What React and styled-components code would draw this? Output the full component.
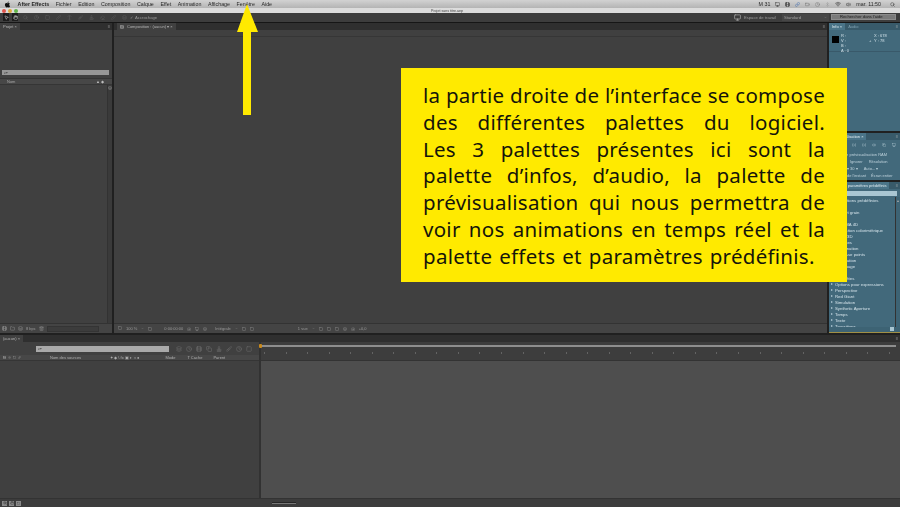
import React from "react";
import styled, { createGlobalStyle } from "styled-components";
import { FaApple } from "react-icons/fa";
import {
  Battery, Bluetooth, Brush, Camera, ChevronDown, Clock, Copy, Eraser, Film, Folder, Hand, Layers, Link, Monitor,
  MousePointer2, Pen, Play, Search, SkipBack, SkipForward, Square, Stamp, Trash2, Type, Volume2, Wifi, ZoomIn,
} from "lucide-react";

const GlobalStyle = createGlobalStyle`
  html, body { margin: 0; height: 507px; overflow: hidden; background: #232323; }
  * { box-sizing: border-box; }
`;

const Page = styled.div`
  position: relative;
  width: 900px;
  height: 507px;
  overflow: hidden;
  font-family: "Liberation Sans", Arial, sans-serif;
`;
const Screen = styled.div`
  width: 900px;
  height: 507px;
  display: flex;
  flex-direction: column;
  background: #202020;
  filter: blur(0.5px);
`;

const MenuBar = styled.div`
  height: 8px;
  flex: none;
  display: flex;
  align-items: center;
  padding: 0 5px 0 4px;
  background: linear-gradient(#d2d2d2, #b4b4b4);
  color: #262626;
  font-size: 5.3px;
`;
const Menus = styled.div`
  display: flex;
  align-items: center;
  gap: 6.6px;
  flex: 1;
`;
const AppleMark = styled.span`
  display: flex;
  width: 7px;
`;
const MenuName = styled.span`
  font-weight: ${(p) => (p.$bold ? "bold" : "normal")};
  white-space: nowrap;
`;
const Status = styled.div`
  display: flex;
  align-items: center;
  gap: 5px;
`;
const StatusEnd = styled.span`
  display: flex;
  margin-left: 4px;
`;
const TitleBar = styled.div`
  height: 5px;
  flex: none;
  display: flex;
  align-items: center;
  position: relative;
  padding-left: 2px;
  gap: 2px;
  background: #dcdcdc;
  color: #444;
  font-size: 3.6px;
`;
const Light = styled.span`
  width: 4px;
  height: 4px;
  border-radius: 50%;
  background: ${(p) => p.$color};
`;
const WindowName = styled.span`
  position: absolute;
  left: 431px;
`;

const Toolbar = styled.div`
  height: 10px;
  flex: none;
  display: flex;
  align-items: center;
  padding: 0 4px 1px 3px;
  background: #3d3d3d;
  border-bottom: 1px solid #161616;
  color: #9a9a9a;
  font-size: 4.2px;
`;
const ToolGroup = styled.div`
  display: flex;
  align-items: center;
  gap: ${(p) => p.$gap || 4}px;
  margin-left: ${(p) => p.$left || 0}px;
`;
const ToolSlot = styled.span`
  display: flex;
  width: 6px;
  height: 8px;
  align-items: center;
  justify-content: center;
  background: ${(p) => (p.$on ? "#1d1d1d" : "transparent")};
  color: ${(p) => (p.$on ? "#eee" : "#626262")};
`;
const Spring = styled.div`
  flex: 1;
`;
const Dropdown = styled.div`
  width: ${(p) => p.$w}px;
  height: 7px;
  display: flex;
  align-items: center;
  justify-content: space-between;
  padding: 0 2px;
  margin-left: 6px;
  background: #464646;
  color: #a0a0a0;
`;
const HelpSearch = styled.div`
  width: 65px;
  height: 6px;
  margin-left: 2px;
  padding-left: 8px;
  background: #7a7a7a;
  border: 1px solid #8c8c8c;
  color: #202020;
  line-height: 4px;
  white-space: nowrap;
`;

const Workspace = styled.div`
  height: 310px;
  flex: none;
  display: flex;
  gap: 2px;
`;
const Panel = styled.div`
  display: flex;
  flex-direction: column;
  width: ${(p) => (p.$w ? `${p.$w}px` : "auto")};
  flex: ${(p) => (p.$w ? "none" : 1)};
  min-width: 0;
  background: #404040;
  color: #a5a5a5;
  font-size: 4px;
`;
const TabBar = styled.div`
  height: 7px;
  flex: none;
  display: flex;
  align-items: stretch;
  background: #2f2f2f;
`;
const Tab = styled.div`
  display: flex;
  align-items: center;
  gap: 3px;
  padding: 0 3px;
  background: #404040;
  color: #b4b4b4;
  white-space: nowrap;
  margin-left: ${(p) => p.$left || 0}px;
`;
const PanelMenu = styled.span`
  margin-left: auto;
  margin-right: 2px;
  align-self: center;
  color: #bdbdbd;
  font-size: 4px;
`;
const ThinRow = styled.div`
  height: 7px;
  flex: none;
  border-bottom: 1px solid #363636;
`;
const ProjectTop = styled.div`
  flex: none;
  height: 45px;
  display: flex;
  align-items: flex-end;
  padding: 0 2px;
`;
const ProjectSearch = styled.div`
  width: 107px;
  height: 5px;
  padding-left: 2px;
  background: #979797;
  color: #222;
  line-height: 5px;
`;
const ColumnHeader = styled.div`
  height: 7px;
  margin-top: 3px;
  flex: none;
  display: flex;
  align-items: center;
  padding: 0 6px 0 7px;
  background: #474747;
  border-top: 1px solid #353535;
  border-bottom: 1px solid #353535;
`;
const ProjectBody = styled.div`
  flex: 1;
  display: flex;
  justify-content: flex-end;
`;
const Scrollbar = styled.div`
  width: ${(p) => p.$w || 5}px;
  display: flex;
  flex-direction: column;
  align-items: center;
  padding-top: 1px;
  background: ${(p) => p.$bg || "#3a3a3a"};
  border-left: 1px solid #323232;
  color: #aaa;
`;
const PanelFooter = styled.div`
  height: 10px;
  flex: none;
  display: flex;
  align-items: center;
  gap: ${(p) => p.$gap || 3}px;
  padding: 0 2px;
  background: #444;
  border-top: 1px solid #333;
  color: #9a9a9a;
  white-space: nowrap;
`;
const FootTrack = styled.div`
  width: 52px;
  height: 6px;
  background: #3c3c3c;
  border: 1px solid #343434;
`;
const CompBody = styled.div`
  flex: 1;
`;
const FootLabel = styled.span`
  margin-left: ${(p) => p.$left || 0}px;
`;

const Column = styled.div`
  width: 71px;
  flex: none;
  display: flex;
  flex-direction: column;
  gap: 2px;
  color: #cfe0e8;
  font-size: 4px;
  border-bottom: 1px solid #a08f45;
`;
const TealPanel = styled.div`
  height: ${(p) => (p.$h ? `${p.$h}px` : "auto")};
  flex: ${(p) => (p.$h ? "none" : 1)};
  display: flex;
  flex-direction: column;
  min-height: 0;
  background: #42697b;
`;
const TealTabs = styled.div`
  height: 7px;
  flex: none;
  display: flex;
  align-items: stretch;
  background: #385a6a;
`;
const TealTab = styled.div`
  display: flex;
  align-items: center;
  gap: 2px;
  padding: 0 3px;
  white-space: nowrap;
  background: ${(p) => (p.$on ? "#4a7488" : "transparent")};
  color: ${(p) => (p.$on ? "#e0edf2" : "#7ea0b0")};
`;
const InfoRow = styled.div`
  display: flex;
  gap: 2px;
  padding: 3px 3px 0;
  height: 22px;
  border-bottom: 1px solid #39596a;
`;
const Swatch = styled.div`
  width: 7px;
  height: 7px;
  margin-top: 3px;
  background: #000;
`;
const Readout = styled.div`
  display: flex;
  flex-direction: column;
  line-height: 5px;
  width: ${(p) => p.$w}px;
`;
const Cross = styled.div`
  width: 3px;
  margin-top: 5px;
`;
const PreviewRow = styled.div`
  height: ${(p) => p.$h || 7}px;
  flex: none;
  display: flex;
  align-items: center;
  gap: ${(p) => p.$gap || 4}px;
  padding-left: ${(p) => p.$left || 0}px;
  white-space: nowrap;
  overflow: hidden;
  color: #bcd0da;
`;
const EffectSearch = styled.div`
  height: 5px;
  flex: none;
  margin: 2px 3px 1px 1px;
  background: #a9c6d2;
`;
const EffectArea = styled.div`
  flex: 1;
  display: flex;
  min-height: 0;
`;
const EffectList = styled.div`
  flex: 1;
  overflow: hidden;
  min-width: 0;
`;
const EffectRow = styled.div`
  height: 6px;
  display: flex;
  align-items: center;
  gap: 2px;
  padding-left: 2px;
  white-space: nowrap;
  color: #d3e2e9;
  font-size: 4.3px;
`;
const Caret = styled.span`
  width: 0;
  height: 0;
  border-left: 2.5px solid #b6cdd8;
  border-top: 1.5px solid transparent;
  border-bottom: 1.5px solid transparent;
`;
const TealFooter = styled.div`
  height: 5px;
  flex: none;
  display: flex;
  justify-content: flex-end;
  padding-right: 6px;
  background: #3d6374;
`;
const FootBox = styled.span`
  width: 4px;
  height: 4px;
  background: #a9c6d2;
`;

const Timeline = styled.div`
  flex: 1;
  margin-top: 2px;
  display: flex;
  flex-direction: column;
  background: #404040;
  color: #a0a0a0;
  font-size: 4px;
`;
const TimelineMain = styled.div`
  flex: 1;
  display: flex;
  min-height: 0;
`;
const LayerSide = styled.div`
  width: 259px;
  flex: none;
  display: flex;
  flex-direction: column;
`;
const LayerTools = styled.div`
  height: 13px;
  display: flex;
  align-items: center;
  gap: 4px;
  padding-left: 36px;
  color: #6f6f6f;
`;
const LayerSearch = styled.div`
  width: 133px;
  height: 6px;
  margin-right: 3px;
  padding-left: 2px;
  background: #a9a9a9;
  color: #222;
  line-height: 6px;
`;
const LayerHeader = styled.div`
  height: 6px;
  display: flex;
  align-items: center;
  gap: 2px;
  padding-left: 3px;
  background: #474747;
  border-bottom: 1px solid #353535;
  white-space: nowrap;
  color: #b0b0b0;
`;
const Divider = styled.div`
  width: 2px;
  flex: none;
  background: #323232;
`;
const TimeSide = styled.div`
  flex: 1;
  display: flex;
  flex-direction: column;
`;
const Ruler = styled.div`
  height: 19px;
  flex: none;
  position: relative;
  padding: 3px 4px 0 1px;
  background: #3d3d3d;
  border-bottom: 1px solid #333;
`;
const WorkBar = styled.div`
  height: 2px;
  background: #8e8e8e;
`;
const Playhead = styled.span`
  position: absolute;
  left: -2px;
  top: 2px;
  width: 3px;
  height: 4px;
  border-radius: 1px;
  background: #c98a1c;
`;
const Ticks = styled.div`
  display: flex;
  justify-content: space-between;
  padding: 5px 6px 0 2px;
`;
const Tick = styled.span`
  width: 1px;
  height: 2px;
  background: #636363;
`;
const TimeBody = styled.div`
  flex: 1;
  background: #4e4e4e;
`;
const TimelineFooter = styled.div`
  height: 9px;
  flex: none;
  display: flex;
  align-items: center;
  gap: 2px;
  padding-left: 2px;
  border-top: 1px solid #333;
  background: #3c3c3c;
`;
const FootIcon = styled.span`
  display: flex;
  width: 5px;
  height: 5px;
  align-items: center;
  justify-content: center;
  background: #8a8a8a;
  color: #333;
`;
const ZoomSlider = styled.div`
  width: 24px;
  height: 2px;
  margin-left: 249px;
  background: #262626;
  border-bottom: 1px solid #777;
`;

/* overlay annotation */
const Callout = styled.div`
  position: absolute;
  left: 401px;
  top: 68px;
  width: 446px;
  height: 214px;
  padding: 14px 22px 0;
  background: #ffea00;
  color: #15150a;
  font-family: "Noto Sans", "Open Sans", sans-serif;
  font-size: 20.5px;
  letter-spacing: 0.27px;
  line-height: 26.8px;
`;
const CalloutLine = styled.div`
  white-space: nowrap;
  text-align: ${(p) => (p.$last ? "left" : "justify")};
  text-align-last: ${(p) => (p.$last ? "left" : "justify")};
  word-spacing: ${(p) => (p.$last ? "1.4px" : "0")};
`;
const Arrow = styled.svg`
  position: absolute;
  left: 236px;
  top: 4px;
`;

const menus = ["Fichier", "Edition", "Composition", "Calque", "Effet", "Animation", "Affichage", "Fenêtre", "Aide"];
const lights = ["#e0544c", "#dfa93a", "#62b54a"];
const tools = [Search, Clock, Square, Pen, Type, Brush, Stamp, Eraser, Pen, Layers];
const effects = [
  "Animations prédéfinies", "", "Bruit et grain", "", "CINEMA 4D", "Correction colorimétrique", "Effets 3D", "Couches", "Déformation",
  "Esquisse points", "Génération", "Masquage", "Flou", "Obsolètes",
  "Options pour expressions", "Perspective", "Red Giant", "Simulation", "Synthetic Aperture", "Temps", "Texte", "Transitions",
];
const calloutLines = [
  "la partie droite de l’interface se compose",
  "des différentes palettes du logiciel.",
  "Les 3 palettes présentes ici sont la",
  "palette d’infos, d’audio, la palette de",
  "prévisualisation qui nous permettra de",
  "voir nos animations en temps réel et la",
  "palette effets et paramètres prédéfinis.",
];

const App = () => {
  return (
    <Page>
      <GlobalStyle />
      <Screen>
        <MenuBar>
          <Menus>
            <AppleMark><FaApple size={7} color="#111" /></AppleMark>
            <MenuName $bold>After Effects</MenuName>
            {menus.map((m) => <MenuName key={m}>{m}</MenuName>)}
          </Menus>
          <Status>
            <MenuName>M 31</MenuName>
            <Monitor size={5} />
            <Film size={5} />
            <Link size={5} color="#2a5fb0" />
            <Battery size={5} color="#666" />
            <Clock size={5} color="#777" />
            <Bluetooth size={5} color="#999" />
            <Wifi size={6} />
            <Volume2 size={5} />
            <MenuName>mar. 11:50</MenuName>
            <StatusEnd><Search size={5} /></StatusEnd>
          </Status>
        </MenuBar>
        <TitleBar>
          {lights.map((c) => <Light key={c} $color={c} />)}
          <WindowName>Projet sans titre.aep</WindowName>
        </TitleBar>
        <Toolbar>
          <ToolSlot $on><MousePointer2 size={5} /></ToolSlot>
          <ToolGroup $left={3}><ToolSlot $on><Hand size={5} /></ToolSlot></ToolGroup>
          <ToolGroup $left={4} $gap={5}>
            {tools.map((Icon, i) => <ToolSlot key={i}><Icon size={5} /></ToolSlot>)}
          </ToolGroup>
          <ToolGroup $left={3} $gap={2}>
            <span>✓</span>
            <span>Accrochage</span>
          </ToolGroup>
          <Spring />
          <Monitor size={7} color="#bbb" />
          <ToolGroup $left={3}>Espace de travail</ToolGroup>
          <Dropdown $w={47}><span>Standard</span><ChevronDown size={3} /></Dropdown>
          <HelpSearch>Rechercher dans l'aide</HelpSearch>
        </Toolbar>

        <Workspace>
          <Panel $w={112}>
            <TabBar>
              <Tab>Projet ×</Tab>
              <PanelMenu>≡</PanelMenu>
            </TabBar>
            <ProjectTop>
              <ProjectSearch>⌕▾</ProjectSearch>
            </ProjectTop>
            <ColumnHeader>
              Nom
              <PanelMenu>▲ ◆</PanelMenu>
            </ColumnHeader>
            <ProjectBody>
              <Scrollbar><Layers size={4} /></Scrollbar>
            </ProjectBody>
            <PanelFooter>
              <Film size={5} />
              <Folder size={5} />
              <Layers size={5} />
              <span>8 bpc</span>
              <Trash2 size={5} />
              <FootTrack />
            </PanelFooter>
          </Panel>

          <Panel>
            <TabBar>
              <Tab $left={3}><Film size={4} />Composition : (aucun) ▾ ×</Tab>
              <PanelMenu>≡</PanelMenu>
            </TabBar>
            <ThinRow />
            <CompBody />
            <PanelFooter $gap={4}>
              <FootLabel $left={2}><Square size={4} /></FootLabel>
              <span>100 %</span>
              <ChevronDown size={3} />
              <Square size={4} />
              <FootLabel $left={8}>0:00:00:00</FootLabel>
              <Camera size={4} />
              <Monitor size={4} />
              <Layers size={4} />
              <FootLabel $left={4}>Intégrale</FootLabel>
              <ChevronDown size={3} />
              <Square size={4} />
              <Square size={4} />
              <FootLabel $left={40}>1 vue</FootLabel>
              <ChevronDown size={3} />
              <Square size={4} />
              <Square size={4} />
              <Square size={4} />
              <Layers size={4} />
              <Camera size={4} />
              <span>+0,0</span>
            </PanelFooter>
          </Panel>

          <Column>
            <TealPanel $h={108}>
              <TealTabs>
                <TealTab $on>Info ×</TealTab>
                <TealTab>Audio</TealTab>
                <PanelMenu>≡</PanelMenu>
              </TealTabs>
              <InfoRow>
                <Swatch />
                <Readout $w={26}>
                  <span>R :</span>
                  <span>V :</span>
                  <span>B :</span>
                  <span>A : 0</span>
                </Readout>
                <Cross>+</Cross>
                <Readout $w={22}>
                  <span>X : 678</span>
                  <span>Y : 78</span>
                </Readout>
              </InfoRow>
            </TealPanel>
            <TealPanel $h={47}>
              <TealTabs>
                <TealTab $on>Prévisualisation ×</TealTab>
                <PanelMenu>≡</PanelMenu>
              </TealTabs>
              <PreviewRow $h={10} $left={3} $gap={6}>
                <SkipBack size={4} />
                <Play size={4} />
                <SkipForward size={4} />
                <SkipForward size={4} />
                <Volume2 size={4} />
                <Copy size={4} />
                <Monitor size={4} />
              </PreviewRow>
              <PreviewRow $h={8}>Options de prévisualisation RAM</PreviewRow>
              <PreviewRow $left={21} $gap={6}><span>Ignorer</span><span>Résolution</span></PreviewRow>
              <PreviewRow $left={18} $gap={6}><span>▾ 30 ▾</span><span>Auto... ▾</span></PreviewRow>
              <PreviewRow $left={4} $gap={5}><span>À partir de l'instant</span><span>Écran entier</span></PreviewRow>
            </TealPanel>
            <TealPanel>
              <TealTabs>
                <TealTab $on>Effets et paramètres prédéfinis</TealTab>
                <PanelMenu>≡</PanelMenu>
              </TealTabs>
              <EffectSearch />
              <EffectArea>
                <EffectList>
                  {effects.map((e, i) => (
                    <EffectRow key={i}>{e && <Caret />}{e}</EffectRow>
                  ))}
                </EffectList>
                <Scrollbar $bg="#3d6374"><span>▴</span></Scrollbar>
              </EffectArea>
              <TealFooter><FootBox /></TealFooter>
            </TealPanel>
          </Column>
        </Workspace>

        <Timeline>
          <TabBar>
            <Tab>(aucun) ×</Tab>
            <PanelMenu>≡</PanelMenu>
          </TabBar>
          <TimelineMain>
            <LayerSide>
              <LayerTools>
                <LayerSearch>⌕▾</LayerSearch>
                {[Layers, Clock, Film, Copy, Stamp, Brush, Clock, Square].map((Icon, i) => <Icon key={i} size={6} />)}
              </LayerTools>
              <LayerHeader>
                {[Film, Volume2, Square, Link].map((Icon, i) => <Icon key={i} size={3} />)}
                <FootLabel $left={27}>Nom des sources</FootLabel>
                <FootLabel $left={27}>✦ ◆ \ fx ▣ ◐ ◑ ●</FootLabel>
                <FootLabel $left={24}>Mode</FootLabel>
                <FootLabel $left={10}>T Cache</FootLabel>
                <FootLabel $left={9}>Parent</FootLabel>
              </LayerHeader>
            </LayerSide>
            <Divider />
            <TimeSide>
              <Ruler>
                <Playhead />
                <WorkBar />
                <Ticks>
                  {Array.from({ length: 30 }, (_, i) => <Tick key={i} />)}
                </Ticks>
              </Ruler>
              <TimeBody />
            </TimeSide>
          </TimelineMain>
          <TimelineFooter>
            <FootIcon><ZoomIn size={4} /></FootIcon>
            <FootIcon><Hand size={4} /></FootIcon>
            <FootIcon><Square size={3} /></FootIcon>
            <ZoomSlider />
          </TimelineFooter>
        </Timeline>
      </Screen>

      <Arrow width="24" height="112" viewBox="0 0 24 112">
        <path d="M11 0 L22 28 L15 28 L15 111 L7 111 L7 28 L1 28 Z" fill="#ffea00" />
      </Arrow>
      <Callout>
        {calloutLines.map((line, i) => (
          <CalloutLine key={line} $last={i === calloutLines.length - 1}>{line}</CalloutLine>
        ))}
      </Callout>
    </Page>
  );
};

export default App;
